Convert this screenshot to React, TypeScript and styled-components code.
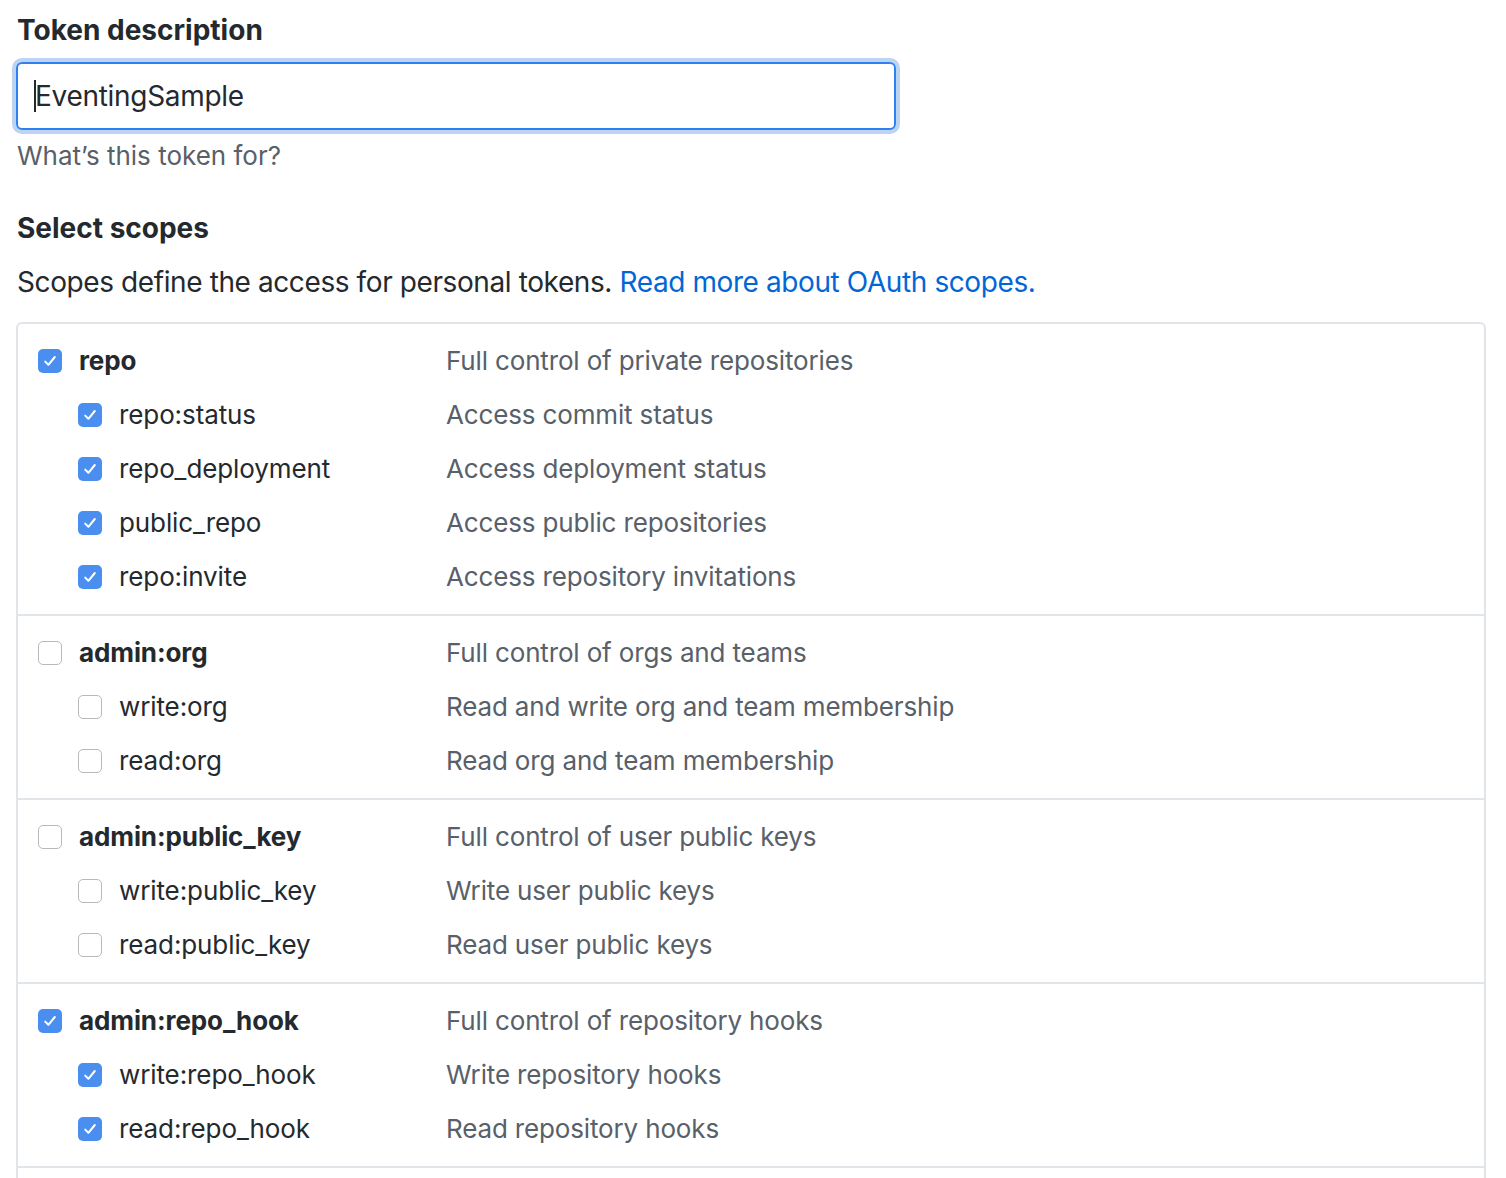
import React from 'react';
import styled, { createGlobalStyle } from 'styled-components';

const GlobalStyle = createGlobalStyle`
  html, body {
    margin: 0;
    padding: 0;
    background: #fff;
  }
  body {
    font-family: Inter, "Liberation Sans", Arial, sans-serif;
    color: #24292e;
  }
`;

type Scope = { name: string; desc: string; checked: boolean; children: { name: string; desc: string; checked: boolean }[] };

const scopes: Scope[] = [
  {
    name: 'repo', desc: 'Full control of private repositories', checked: true,
    children: [
      { name: 'repo:status', desc: 'Access commit status', checked: true },
      { name: 'repo_deployment', desc: 'Access deployment status', checked: true },
      { name: 'public_repo', desc: 'Access public repositories', checked: true },
      { name: 'repo:invite', desc: 'Access repository invitations', checked: true },
    ],
  },
  {
    name: 'admin:org', desc: 'Full control of orgs and teams', checked: false,
    children: [
      { name: 'write:org', desc: 'Read and write org and team membership', checked: false },
      { name: 'read:org', desc: 'Read org and team membership', checked: false },
    ],
  },
  {
    name: 'admin:public_key', desc: 'Full control of user public keys', checked: false,
    children: [
      { name: 'write:public_key', desc: 'Write user public keys', checked: false },
      { name: 'read:public_key', desc: 'Read user public keys', checked: false },
    ],
  },
  {
    name: 'admin:repo_hook', desc: 'Full control of repository hooks', checked: true,
    children: [
      { name: 'write:repo_hook', desc: 'Write repository hooks', checked: true },
      { name: 'read:repo_hook', desc: 'Read repository hooks', checked: true },
    ],
  },
];

function Check({ checked }: { checked: boolean }) {
  return (
    <Box $checked={checked}>
      {checked && (
        <svg width="18" height="18" viewBox="0 0 18 18">
          <path d="M4.2 9.6 L7.4 12.8 L13.8 5" fill="none" stroke="#fff" strokeWidth="2" strokeLinecap="round" strokeLinejoin="round" />
        </svg>
      )}
    </Box>
  );
}

export default function App() {
  return (
    <>
      <GlobalStyle />
      <Page>
        <Heading>Token description</Heading>
        <InputWrap>
          <Caret />
          <TextInput defaultValue="EventingSample" />
        </InputWrap>
        <Note>What’s this token for?</Note>

        <Heading $top={38}>Select scopes</Heading>
        <Lead>
          Scopes define the access for personal tokens. <Link href="#">Read more about OAuth scopes.</Link>
        </Lead>

        <ScopeBox>
          {scopes.map((s) => (
            <Group key={s.name}>
              <Row>
                <LabelCell>
                  <Check checked={s.checked} />
                  <Name $parent>{s.name}</Name>
                </LabelCell>
                <Desc>{s.desc}</Desc>
              </Row>
              {s.children.map((c) => (
                <Row key={c.name}>
                  <LabelCell $child>
                    <Check checked={c.checked} />
                    <Name>{c.name}</Name>
                  </LabelCell>
                  <Desc>{c.desc}</Desc>
                </Row>
              ))}
            </Group>
          ))}
          <Group />
        </ScopeBox>
      </Page>
    </>
  );
}

const Page = styled.div`
  padding: 12px 20px 0 16px;
  width: 1470px;
`;

const Heading = styled.h2<{ $top?: number }>`
  margin: ${(p) => p.$top ?? 0}px 0 0 1px;
  font-size: 28px;
  font-weight: 700;
  line-height: 36px;
  color: #24292e;
`;

const InputWrap = styled.div`
  margin-top: 14px;
  width: 880px;
  height: 68px;
  border: 2px solid #2f80f0;
  border-radius: 6px;
  box-shadow: 0 0 0 4px #bcd3f3;
  box-sizing: border-box;
  display: flex;
  align-items: center;
  padding-left: 16px;
`;

const Caret = styled.span`
  width: 2px;
  height: 32px;
  background: #24292e;
  flex: none;
  margin-right: -1px;
`;

const TextInput = styled.input`
  border: none;
  outline: none;
  width: 100%;
  font-family: inherit;
  font-size: 28px;
  letter-spacing: -0.3px;
  color: #24292e;
  padding: 0;
  background: transparent;
`;

const Note = styled.p`
  margin: 10px 0 0 1px;
  font-size: 26px;
  line-height: 32px;
  color: #586069;
`;

const Lead = styled.p`
  margin: 18px 0 0 1px;
  font-size: 28px;
  letter-spacing: -0.4px;
  line-height: 36px;
  color: #24292e;
`;

const Link = styled.a`
  color: #0366d6;
  text-decoration: none;
`;

const ScopeBox = styled.div`
  margin-top: 22px;
  border: 2px solid #e1e4e8;
  border-bottom: none;
  border-radius: 6px 6px 0 0;
  width: 1470px;
  box-sizing: border-box;
`;

const Group = styled.div`
  padding: 10px 0;
  border-bottom: 2px solid #e1e4e8;
  &:last-child {
    border-bottom: none;
    padding: 0;
    height: 12px;
  }
`;

const Row = styled.div`
  display: grid;
  grid-template-columns: 428px 1fr;
  align-items: center;
  height: 54px;
`;

const LabelCell = styled.div<{ $child?: boolean }>`
  display: flex;
  align-items: center;
  gap: 17px;
  padding-left: ${(p) => (p.$child ? 60 : 20)}px;
`;

const Box = styled.span<{ $checked: boolean }>`
  width: 24px;
  height: 24px;
  box-sizing: border-box;
  border-radius: 5px;
  display: inline-flex;
  align-items: center;
  justify-content: center;
  background: ${(p) => (p.$checked ? '#4a8ff0' : '#fff')};
  border: ${(p) => (p.$checked ? 'none' : '1.5px solid #b9b9b9')};
  flex: none;
`;

const Name = styled.span<{ $parent?: boolean }>`
  font-size: 26px;
  font-weight: ${(p) => (p.$parent ? 700 : 400)};
  letter-spacing: -0.1px;
  color: #24292e;
  line-height: 36px;
`;

const Desc = styled.span`
  font-size: 26px;
  letter-spacing: -0.15px;
  line-height: 36px;
  color: #586069;
`;
